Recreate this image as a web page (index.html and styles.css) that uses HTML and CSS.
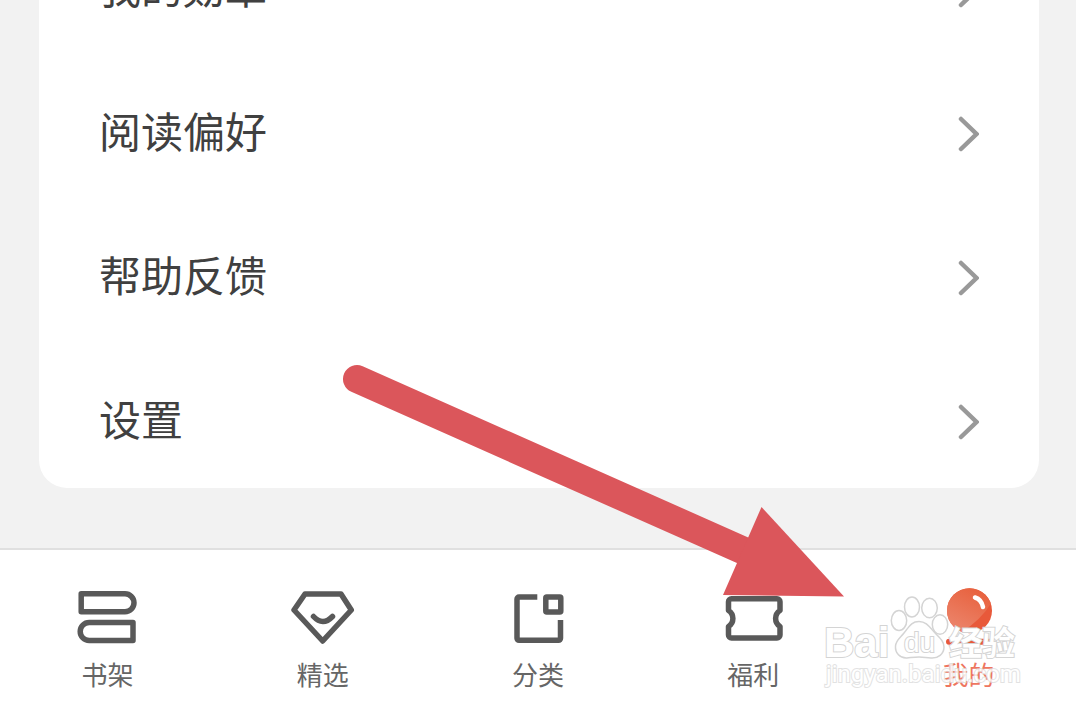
FILE: index.html
```html
<!DOCTYPE html>
<html lang="zh-CN">
<head>
<meta charset="utf-8">
<meta name="viewport" content="width=device-width, initial-scale=1">
<title>我的</title>
<link rel="stylesheet" href="styles.css">
</head>
<body>
<div class="app">
  <main class="content">
    <div class="card">
      <button class="row" type="button"><span class="row-label">我的勋章</span><svg class="chevron" viewBox="0 0 21 36" aria-hidden="true"><path d="M3 3L18.500 18L3 33"/></svg></button>
      <button class="row" type="button"><span class="row-label">阅读偏好</span><svg class="chevron" viewBox="0 0 21 36" aria-hidden="true"><path d="M3 3L18.500 18L3 33"/></svg></button>
      <button class="row" type="button"><span class="row-label">帮助反馈</span><svg class="chevron" viewBox="0 0 21 36" aria-hidden="true"><path d="M3 3L18.500 18L3 33"/></svg></button>
      <button class="row" type="button"><span class="row-label">设置</span><svg class="chevron" viewBox="0 0 21 36" aria-hidden="true"><path d="M3 3L18.500 18L3 33"/></svg></button>
    </div>
  </main>
  <nav class="tabs">
    <button class="tab" type="button">
      <svg class="icon" viewBox="0 0 64 64" aria-hidden="true"><path d="M5.200 7.800H49a9 9 0 0 1 0 18H5.200Z"/><path d="M57 36.500H13.200a9 9 0 0 0 0 18H57Z"/></svg>
      <span>书架</span>
    </button>
    <button class="tab" type="button">
      <svg class="icon" viewBox="0 0 64 64" aria-hidden="true"><path d="M14 8H50L60.300 24L31.700 55L3 24Z"/><path d="M22.500 30.500Q31.800 40.500 41.500 30.500" stroke-linecap="round"/></svg>
      <span>精选</span>
    </button>
    <button class="tab" type="button">
      <svg class="icon" viewBox="0 0 64 64" aria-hidden="true"><path d="M31.300 11H13a2 2 0 0 0-2 2V52.300a2 2 0 0 0 2 2H52.500a2 2 0 0 0 2-2V34"/><rect x="39.800" y="11" width="15" height="15" rx="1"/></svg>
      <span>分类</span>
    </button>
    <button class="tab" type="button">
      <svg class="icon" viewBox="0 0 64 64" aria-hidden="true"><path d="M10.500 12.700H56a3 3 0 0 1 3 3V24.500A9.500 9.500 0 0 0 59 40.500V49a3 3 0 0 1-3 3H10.500a3 3 0 0 1-3-3V40.500A9.500 9.500 0 0 0 7.500 24.500V15.700a3 3 0 0 1 3-3Z"/></svg>
      <span>福利</span>
    </button>
    <button class="tab tab-active" type="button" aria-current="page">
      <svg class="icon" viewBox="0 0 64 64" aria-hidden="true">
        <defs>
          <linearGradient id="ball" x1="0" y1="1" x2="0.500" y2="0"><stop offset="0" stop-color="#ec8a72"/><stop offset="1" stop-color="#e8623f"/></linearGradient>
          <clipPath id="ball-shape"><circle cx="33.500" cy="24.700" r="22.500"/></clipPath>
        </defs>
        <g clip-path="url(#ball-shape)">
          <path class="solid" d="M10 0H57V48H10Z" fill="#e8593a"/>
          <path class="solid" d="M10 0H57V14Q46 34 24 47H10Z" fill="url(#ball)"/>
        </g>
        <path class="shine" d="M39 11.500Q45.500 13.500 47 21"/>
        <path class="base" d="M13 55.700H53"/>
      </svg>
      <span>我的</span>
    </button>
  </nav>
  <svg class="arrow" viewBox="0 0 502 234" aria-hidden="true"><path d="M15 16L400 187"/><path class="head" d="M419.500 144L502 233.500L381 232Z"/></svg>
  <svg class="watermark" viewBox="0 0 200 100" role="img" aria-label="Baidu 经验">
    <g class="paw">
      <ellipse cx="80" cy="30.500" rx="7.700" ry="10"/>
      <ellipse cx="93" cy="17" rx="7.500" ry="10"/>
      <ellipse cx="110.500" cy="18" rx="7.800" ry="9.700"/>
      <ellipse cx="121" cy="34.500" rx="7.700" ry="9.700"/>
      <path d="M100 31.500C108 31.500 111 38 117 44C122 49 125 52 125 57C125 64 119 68.500 112 68C106 67.500 103 67 100 67C96 67 93 67.500 88 68C81 68.500 76 63 76.500 56C77 50 81 48 85 43C90 37 92 31.500 100 31.500Z"/>
    </g>
    <text class="wm-name" x="5" y="67">Bai</text>
    <text class="wm-du" x="85" y="62">du</text>
    <text class="wm-cn" x="130" y="65">经验</text>
    <text class="wm-url" x="7" y="92">jingyan.baidu.com</text>
  </svg>
</div>
</body>
</html>
```
FILE: styles.css
```css
* {
  box-sizing: border-box;
}

body {
  margin: 0;
  background: #f2f2f2;
  font-family: "Noto Sans CJK SC", sans-serif;
}

.app {
  position: relative;
  display: flex;
  flex-direction: column;
  height: 100vh;
  overflow: hidden;
}

.content {
  flex: 1;
  min-height: 0;
  display: flex;
  flex-direction: column;
  justify-content: flex-end;
  padding: 0 37px 60px 39px;
  overflow: hidden;
}

.card {
  display: flex;
  flex-direction: column;
  flex-shrink: 0;
  gap: 12px;
  background: #fff;
  border-radius: 28px;
}

.row {
  display: flex;
  align-items: center;
  justify-content: space-between;
  height: 132px;
  padding: 0 60px;
  border: 0;
  background: none;
  color: #404040;
  font: inherit;
  font-size: 42px;
  line-height: 60px;
}

.row-label {
  padding-bottom: 8px;
}

.chevron {
  width: 21px;
  height: 36px;
  fill: none;
  stroke: #999;
  stroke-width: 4.5;
  stroke-linecap: round;
}

.tabs {
  display: grid;
  grid-template-columns: repeat(5, 1fr);
  flex-shrink: 0;
  height: 164px;
  border-top: 2px solid #e0e0e0;
  background: #fff;
}

.tab {
  display: flex;
  flex-direction: column;
  align-items: center;
  gap: 6px;
  padding: 36px 0 0;
  border: 0;
  background: none;
  color: #666;
  font: inherit;
  font-size: 26px;
  line-height: 36px;
}

.tab-active {
  color: #ee7660;
}

.icon {
  width: 64px;
  height: 64px;
  fill: none;
  stroke: #595959;
  stroke-width: 5.5;
  stroke-linejoin: round;
}

.icon .solid {
  stroke: none;
}

.icon .shine {
  stroke: #fff;
  stroke-width: 4.5;
  stroke-linecap: round;
}

.icon .base {
  stroke: #e8593a;
  stroke-width: 6;
  stroke-linecap: round;
}

.arrow {
  position: absolute;
  left: 342px;
  bottom: 115px;
  width: 502px;
  height: 234px;
  fill: none;
  stroke: #db565b;
  stroke-width: 28;
  stroke-linecap: round;
  pointer-events: none;
}

.arrow .head {
  fill: #db565b;
  stroke: none;
}

.watermark {
  position: absolute;
  right: 57px;
  bottom: 22px;
  width: 200px;
  height: 100px;
  overflow: visible;
  font-family: "Liberation Sans", "Noto Sans CJK SC", sans-serif;
  fill: #fff;
  stroke: #d4d4d4;
  stroke-width: 2;
  paint-order: stroke;
  pointer-events: none;
}

.paw {
  fill: none;
  stroke-width: 1.5;
}

.wm-name {
  font-size: 42px;
  font-weight: 700;
}

.wm-du {
  font-size: 28px;
}

.wm-cn {
  font-size: 33px;
  font-weight: 700;
}

.wm-url {
  font-family: Roboto, sans-serif;
  font-size: 24px;
  stroke: #dcdcdc;
  opacity: 0.8;
}
```
